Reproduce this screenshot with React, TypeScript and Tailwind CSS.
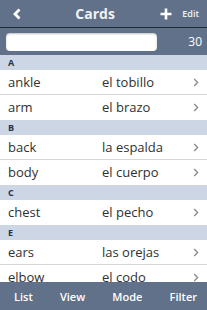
import React from 'react';

type Row = { en: string; es: string };
type Section = { letter: string; rows: Row[] };

const SECTIONS: Section[] = [
  { letter: 'A', rows: [{ en: 'ankle', es: 'el tobillo' }, { en: 'arm', es: 'el brazo' }] },
  { letter: 'B', rows: [{ en: 'back', es: 'la espalda' }, { en: 'body', es: 'el cuerpo' }] },
  { letter: 'C', rows: [{ en: 'chest', es: 'el pecho' }] },
  { letter: 'E', rows: [{ en: 'ears', es: 'las orejas' }, { en: 'elbow', es: 'el codo' }] },
];

function Chevron() {
  return (
    <svg width="6" height="9" viewBox="0 0 6 9" className="shrink-0">
      <path d="M1.2 1 L4.6 4.5 L1.2 8" fill="none" stroke="#8a8a8a" strokeWidth="1.3" />
    </svg>
  );
}

export default function App() {
  return (
    <div
      className="flex h-[310px] w-[207px] flex-col overflow-hidden bg-white"
      style={{ fontFamily: '"Open Sans", "Noto Sans", sans-serif' }}
    >
      {/* top bar */}
      <div className="flex h-[28px] shrink-0 items-center border-b border-[#1f2a3a] bg-[#607189] pl-[12px] pr-[8px]">
        <svg width="10" height="12" viewBox="0 0 10 12" className="shrink-0">
          <path d="M7.5 1.5 L3 6 L7.5 10.5" fill="none" stroke="#ffffff" strokeWidth="2.8" />
        </svg>
        <div className="flex-1 pl-[8px] text-center text-[14px] font-bold leading-none text-[#eef1f5]">Cards</div>
        <svg width="12" height="12" viewBox="0 0 12 12" className="mr-[10px] shrink-0">
          <path d="M6 0.5 V11.5 M0.5 6 H11.5" stroke="#ffffff" strokeWidth="2.6" />
        </svg>
        <span className="text-[9px] font-semibold leading-none text-[#eef1f5]">Edit</span>
      </div>

      {/* search row */}
      <div className="flex h-[27px] shrink-0 items-center bg-[#607189] pl-[6px] pr-[5px]">
        <div className="h-[18px] w-[151px] rounded-[4px] bg-white shadow-[inset_0_1px_2px_rgba(0,0,0,0.25)]" />
        <span className="flex-1 text-right text-[12px] leading-none text-white">30</span>
      </div>

      {/* list */}
      <div className="flex-1 overflow-hidden">
        {SECTIONS.map((section) => (
          <div key={section.letter}>
            <div className="flex h-[15px] items-center bg-[#cdd6e4] px-[8px] text-[9px] font-bold leading-none text-[#27324d]">
              {section.letter}
            </div>
            {section.rows.map((row, i) => (
              <div
                key={row.en}
                className={`flex h-[25px] items-center pl-[8px] pr-[8px] text-[13px] leading-none text-[#303030] ${
                  i < section.rows.length - 1 ? 'border-b border-[#d6d6d6]' : ''
                }`}
              >
                <span className="w-[94px]">{row.en}</span>
                <span className="flex-1">{row.es}</span>
                <Chevron />
              </div>
            ))}
          </div>
        ))}
      </div>

      {/* bottom bar */}
      <div className="flex h-[28px] shrink-0 items-center justify-between bg-[#607189] pl-[14px] pr-[10px] text-[11px] font-semibold leading-none text-white">
        <span>List</span>
        <span>View</span>
        <span>Mode</span>
        <span>Filter</span>
      </div>
    </div>
  );
}
